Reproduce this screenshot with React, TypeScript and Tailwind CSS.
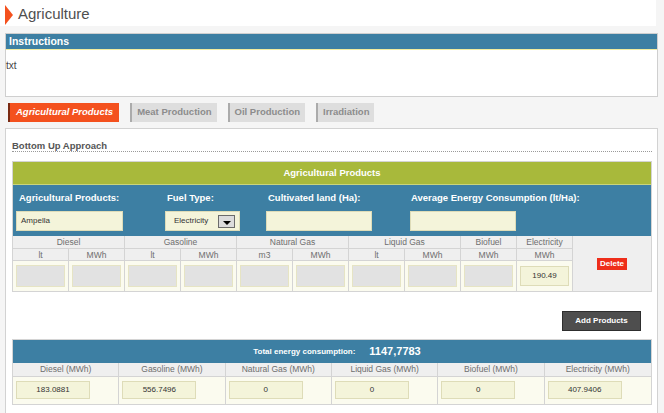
import React from 'react'

const FONT = { fontFamily: '"Liberation Sans", Arial, sans-serif' }

const TABS = ['Meat Production', 'Oil Production', 'Irradiation']

const FUEL_HEADERS: { label: string; span: number }[] = [
  { label: 'Diesel', span: 2 },
  { label: 'Gasoline', span: 2 },
  { label: 'Natural Gas', span: 2 },
  { label: 'Liquid Gas', span: 2 },
  { label: 'Biofuel', span: 1 },
  { label: 'Electricity', span: 1 },
]

const UNITS = ['lt', 'MWh', 'lt', 'MWh', 'm3', 'MWh', 'lt', 'MWh', 'MWh', 'MWh']

const TOTALS = [
  { label: 'Diesel (MWh)', value: '183.0881' },
  { label: 'Gasoline (MWh)', value: '556.7496' },
  { label: 'Natural Gas (MWh)', value: '0' },
  { label: 'Liquid Gas (MWh)', value: '0' },
  { label: 'Biofuel (MWh)', value: '0' },
  { label: 'Electricity (MWh)', value: '407.9406' },
]

function BeigeInput({ value, className = '' }: { value?: string; className?: string }) {
  return (
    <div
      className={`h-[20px] bg-[#f4f4da] border border-[#dedcb8] flex items-center text-[8px] text-[#333] ${className}`}
    >
      {value}
    </div>
  )
}

export default function App() {
  return (
    <div className="w-[664px] h-[413px] overflow-hidden bg-[#f5f5f5]" style={FONT}>
      {/* Page title */}
      <div className="h-[26px] w-[656px] bg-white flex items-center">
        <div className="w-[5px]" />
        <div className="w-0 h-0 border-t-[10px] border-b-[10px] border-l-[8px] border-t-transparent border-b-transparent border-l-[#f4511e] mt-[4px]" />
        <h1 className="ml-[5px] text-[15px] text-[#4f4f4f] leading-none mt-[1px]">Agriculture</h1>
      </div>

      {/* Instructions */}
      <div className="mt-[7px] ml-[5px] w-[653px] h-[64px] border border-[#cfcfcf] bg-white">
        <div className="h-[16px] bg-[#3d7fa3] border-b border-[#f2eda0] flex items-center pl-[3px]">
          <span className="text-[10.5px] font-bold text-white">Instructions</span>
        </div>
        <p className="mt-[10px] text-[10px] leading-[12px] text-[#444]">txt</p>
      </div>

      {/* Tabs */}
      <div className="mt-[6px] ml-[8px] flex gap-[11px] h-[19px]">
        <div className="h-full bg-[#f4511e] border-l-2 border-[#7a2a12] flex items-center px-[6px]">
          <span className="text-[9.5px] font-bold italic text-white">Agricultural Products</span>
        </div>
        {TABS.map((t) => (
          <div key={t} className="h-full bg-[#dedede] border-l-2 border-[#ababab] flex items-center px-[5px]">
            <span className="text-[9.5px] font-bold text-[#8c8c8c]">{t}</span>
          </div>
        ))}
      </div>

      {/* Main panel */}
      <div className="mt-[6px] ml-[5px] w-[653px] h-[300px] border border-[#d2d2d2] bg-white pl-[6px] pr-[5px]">
        <div className="pt-[11px] text-[9.5px] leading-[11px] border-b border-dotted border-[#9a9a9a]">
          <span className="font-bold text-[#555]">Bottom Up Approach</span>
        </div>

        {/* Product block */}
        <div className="mt-[9px] border border-[#d4d4d4]">
          <div className="h-[23px] bg-[#a8b93b] flex items-center justify-center border-b border-[#c9d47a]">
            <span className="text-[9.5px] font-bold text-white">Agricultural Products</span>
          </div>

          <div className="h-[51px] bg-[#3d7fa3] grid grid-cols-[149px_101px_144px_1fr] grid-rows-[12px_20px] gap-y-[7px] pl-[3px] pt-[7px] text-[9.5px] leading-[12px]">
            <span className="pl-[3px] font-bold text-white">Agricultural Products:</span>
            <span className="pl-[2px] font-bold text-white">Fuel Type:</span>
            <span className="pl-[2px] font-bold text-white">Cultivated land (Ha):</span>
            <span className="pl-[1px] font-bold text-white">Average Energy Consumption (lt/Ha):</span>

            <BeigeInput value="Ampella" className="w-[107px] pl-[4px]" />
            <div className="w-[75px] h-[20px] bg-[#f4f4da] border border-[#dedcb8] flex items-center pl-[8px]">
              <span className="text-[8px] text-[#333]">Electricity</span>
              <div className="ml-auto mr-[4px] w-[17px] h-[13px] bg-[#dcdcdc] border border-[#6b6b6b] flex items-end justify-center pb-[2px]">
                <div className="w-0 h-0 border-l-[4px] border-r-[4px] border-t-[4px] border-l-transparent border-r-transparent border-t-black" />
              </div>
            </div>
            <BeigeInput className="w-[106px]" />
            <BeigeInput className="w-[106px]" />
          </div>

          <div className="grid grid-cols-[repeat(10,56px)_1fr] grid-rows-[13px_12px_30px] text-[8.5px] leading-[10px] text-[#6e6e6e]">
            {FUEL_HEADERS.map((h) => (
              <div
                key={h.label}
                className={`${h.span === 2 ? 'col-span-2' : 'col-span-1'} bg-[#efefef] border-r border-b border-[#d4d4d4] flex items-center justify-center`}
              >
                {h.label}
              </div>
            ))}
            <div className="row-span-3 bg-[#efefef] flex items-center justify-center">
              <div className="bg-[#ee2e1a] px-[3px] h-[12px] flex items-center">
                <span className="text-[8px] font-bold text-white">Delete</span>
              </div>
            </div>
            {UNITS.map((u, i) => (
              <div key={i} className="bg-[#efefef] border-r border-b border-[#d4d4d4] flex items-center justify-center">
                {u}
              </div>
            ))}
            {UNITS.map((_, i) => (
              <div key={i} className="bg-[#fbfbef] border-r border-[#d4d4d4] flex items-center justify-center px-[3px]">
                {i === 9 ? (
                  <div className="w-full h-[20px] bg-[#f4f4da] border border-[#dedcb8] flex items-center justify-center text-[8px] text-[#333]">
                    190.49
                  </div>
                ) : (
                  <div className="w-full h-[22px] bg-[#e2e2e2] border border-[#e6e4c4]" />
                )}
              </div>
            ))}
          </div>
        </div>

        <div className="mt-[19px] flex justify-end pr-[11px]">
          <div className="w-[79px] h-[20px] bg-[#4e4e4e] border border-[#2e2e2e] flex items-center justify-center">
            <span className="text-[8px] font-bold text-white">Add Products</span>
          </div>
        </div>

        {/* Totals */}
        <div className="mt-[8px] border border-[#d4d4d4]">
          <div className="h-[23px] bg-[#3d7fa3] flex items-center justify-center gap-[14px] pl-[10px]">
            <span className="text-[8px] font-bold text-white">Total energy consumption:</span>
            <span className="text-[11px] font-bold text-white">1147,7783</span>
          </div>
          <div className="grid grid-cols-6">
            {TOTALS.map((t, i) => (
              <div
                key={t.label}
                className={`h-[14px] bg-[#efefef] border-b border-[#d4d4d4] ${i < 5 ? 'border-r' : ''} flex items-center justify-center text-[8.5px] text-[#6e6e6e]`}
              >
                {t.label}
              </div>
            ))}
            {TOTALS.map((t, i) => (
              <div
                key={t.label + 'v'}
                className={`h-[27px] bg-[#fbfbef] ${i < 5 ? 'border-r' : ''} border-[#d4d4d4] pl-[3px] pt-[4px]`}
              >
                <div className="w-[74px] h-[18px] bg-[#f4f4da] border border-[#dedcb8] flex items-center justify-center text-[8px] text-[#333]">
                  {t.value}
                </div>
              </div>
            ))}
          </div>
        </div>
      </div>
    </div>
  )
}
